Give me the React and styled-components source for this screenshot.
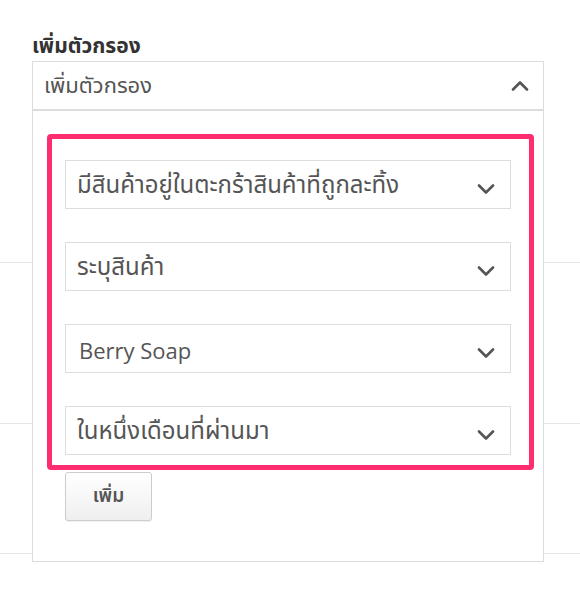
import React from "react";
import styled, {createGlobalStyle} from "styled-components";

const GlobalStyle = createGlobalStyle`
    *, *::before, *::after {
        box-sizing: border-box;
    }
    html, body {
        margin: 0;
        padding: 0;
        background: #fff;
    }
    body {
        font-family: "Open Sans", "Noto Sans Thai", "Noto Sans", sans-serif;
        color: #555;
    }
`;

const Page = styled.div`
    position: relative;
    width: 580px;
    height: 612px;
    overflow: hidden;
`;

// table rows sitting behind the filter popover
const Rows = styled.div`
    display: flex;
    flex-direction: column;
`;

const Row = styled.div`
    height: ${props => props.h}px;
    border-bottom: 1px solid #e6e6e6;
`;

const Popover = styled.div`
    position: absolute;
    top: 30px;
    left: 32px;
    width: 512px;
`;

const Title = styled.div`
    font-size: 21px;
    font-weight: 700;
    color: #333;
    height: 31px;
    line-height: 31px;
`;

const Panel = styled.div`
    border: 1px solid #ddd;
    background: #fff;
`;

const Header = styled.div`
    display: flex;
    align-items: center;
    justify-content: space-between;
    height: 49px;
    padding: 0 14px 0 11px;
    border-bottom: 2px solid #ddd;
    font-size: 22px;
    color: #555;
`;

const Body = styled.div`
    padding: 23px 9px 40px 14px;
`;

const Highlight = styled.div`
    border: 5px solid #ff2d6f;
    border-radius: 4px;
    padding: 21px 18px 10px 13px;
    display: flex;
    flex-direction: column;
    gap: 33px;
`;

const Select = styled.div`
    display: flex;
    align-items: center;
    justify-content: space-between;
    height: 49px;
    padding: 2px 15px 0 ${props => props.thai ? 11 : 13}px;
    border: 1px solid #ddd;
    font-size: ${props => props.thai ? 24 : 22}px;
    color: #555;
`;

const AddButton = styled.button`
    margin: 2px 0 0 18px;
    width: 87px;
    height: 49px;
    border: 1px solid #ccc;
    border-radius: 3px;
    background: linear-gradient(#fff, #efefef);
    box-shadow: 0 1px 1px rgba(0,0,0,0.06);
    font-family: inherit;
    font-size: 19px;
    font-weight: 600;
    color: #555;
    padding: 0;
`;

const Chevron = ({up}) => (
    <svg width="18" height="11" viewBox="0 0 18 11" style={{marginTop: up ? 0 : 8}}>
        <path d={up ? "M2 9.5 L9 2.5 L16 9.5" : "M2 1.5 L9 8.5 L16 1.5"}
              fill="none" stroke="#555" strokeWidth="2.6" strokeLinecap="round" strokeLinejoin="round"/>
    </svg>
);

const filters = [
    {label: "มีสินค้าอยู่ในตะกร้าสินค้าที่ถูกละทิ้ง", thai: true},
    {label: "ระบุสินค้า", thai: true},
    {label: "Berry Soap", thai: false},
    {label: "ในหนึ่งเดือนที่ผ่านมา", thai: true}
];

export default function App() {
    return (
        <Page>
            <GlobalStyle/>
            <Rows>
                <Row h={263}/>
                <Row h={161}/>
                <Row h={130}/>
            </Rows>
            <Popover>
                <Title>เพิ่มตัวกรอง</Title>
                <Panel>
                    <Header>
                        เพิ่มตัวกรอง
                        <Chevron up/>
                    </Header>
                    <Body>
                        <Highlight>
                            {filters.map(f => (
                                <Select key={f.label} thai={f.thai}>
                                    {f.label}
                                    <Chevron/>
                                </Select>
                            ))}
                        </Highlight>
                        <AddButton>เพิ่ม</AddButton>
                    </Body>
                </Panel>
            </Popover>
        </Page>
    );
}
